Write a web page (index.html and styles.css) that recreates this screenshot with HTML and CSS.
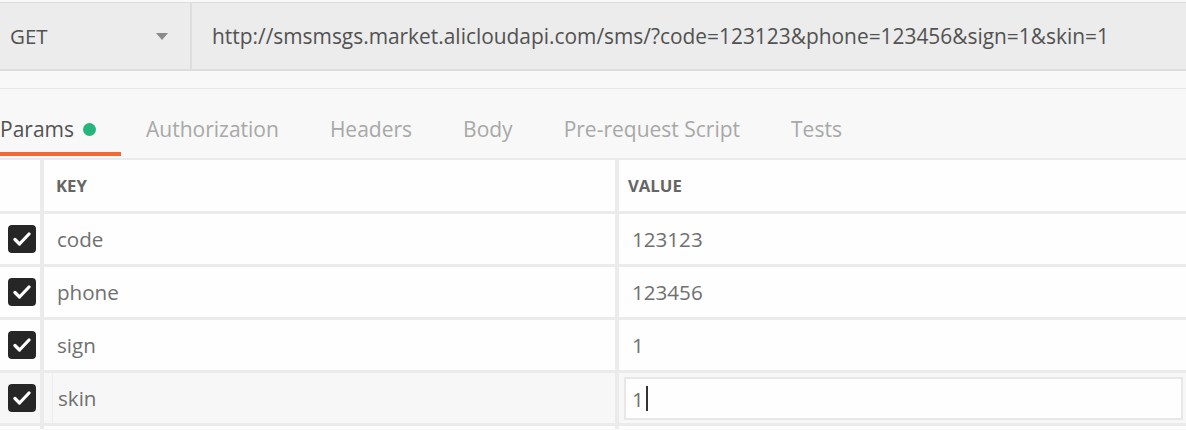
FILE: index.html
```html
<!DOCTYPE html>
<html lang="en">
<head>
<meta charset="utf-8">
<title>Request</title>
<link rel="stylesheet" href="styles.css">
</head>
<body>
<div class="request-bar">
  <div class="method">
    <span class="method-name">GET</span>
    <svg class="caret" width="12" height="7" viewBox="0 0 12 7"><path d="M0 0 H12 L6 7 Z" fill="#8a8a8a"/></svg>
  </div>
  <div class="url">http://smsmsgs.market.alicloudapi.com/sms/?code=123123&amp;phone=123456&amp;sign=1&amp;skin=1</div>
</div>
<div class="spacer"></div>
<nav class="tabs">
  <div class="tab active">Params <span class="dot"></span></div>
  <div class="tab">Authorization</div>
  <div class="tab">Headers</div>
  <div class="tab">Body</div>
  <div class="tab">Pre-request Script</div>
  <div class="tab">Tests</div>
</nav>
<div class="params">
  <div class="cell gutter"></div>
  <div class="cell head">KEY</div>
  <div class="cell head value-col">VALUE</div>

  <div class="cell gutter"><span class="check"><svg width="18" height="14" viewBox="0 0 18 14"><path d="M2 7.5 L6.5 12 L16 2" fill="none" stroke="#fff" stroke-width="3.2" stroke-linecap="round" stroke-linejoin="round"/></svg></span></div>
  <div class="cell">code</div>
  <div class="cell value-col">123123</div>

  <div class="cell gutter"><span class="check"><svg width="18" height="14" viewBox="0 0 18 14"><path d="M2 7.5 L6.5 12 L16 2" fill="none" stroke="#fff" stroke-width="3.2" stroke-linecap="round" stroke-linejoin="round"/></svg></span></div>
  <div class="cell">phone</div>
  <div class="cell value-col">123456</div>

  <div class="cell gutter"><span class="check"><svg width="18" height="14" viewBox="0 0 18 14"><path d="M2 7.5 L6.5 12 L16 2" fill="none" stroke="#fff" stroke-width="3.2" stroke-linecap="round" stroke-linejoin="round"/></svg></span></div>
  <div class="cell">sign</div>
  <div class="cell value-col">1</div>

  <div class="cell gutter hover"><span class="check"><svg width="18" height="14" viewBox="0 0 18 14"><path d="M2 7.5 L6.5 12 L16 2" fill="none" stroke="#fff" stroke-width="3.2" stroke-linecap="round" stroke-linejoin="round"/></svg></span></div>
  <div class="cell hover key-edit"><span class="key-box">skin</span></div>
  <div class="cell hover value-edit"><span class="input">1<span class="cursor"></span></span></div>

  <div class="cell gutter"></div>
  <div class="cell"></div>
  <div class="cell"></div>
</div>
</body>
</html>
```
FILE: styles.css
```css
* { box-sizing: border-box; }
html, body { margin: 0; padding: 0; }
body {
  background: #f7f8f7;
  font-family: "Open Sans", "DejaVu Sans", sans-serif;
  overflow: hidden;
  height: 430px;
}
.request-bar {
  margin-top: 2px;
  height: 69px;
  display: flex;
  background: #ebeceb;
  border-top: 1px solid #dcdddc;
  border-bottom: 2px solid #dcdddc;
}
.method {
  width: 192px;
  flex: none;
  display: flex;
  align-items: center;
  justify-content: space-between;
  padding: 0 22px 0 10px;
  border-right: 2px solid #dcdddc;
}
.method-name {
  font-size: 20.5px;
  color: #525252;
}
.caret { display: block; margin-top: 1px; }
.url {
  display: flex;
  align-items: center;
  padding-left: 20px;
  font-size: 20.9px;
  color: #525252;
  white-space: nowrap;
}
.spacer {
  height: 18px;
  border-bottom: 1px solid #e6e7e6;
}
.tabs {
  height: 71px;
  display: flex;
  margin-left: -25.5px;
  border-bottom: 2px solid #eaebea;
}
.tab {
  display: flex;
  align-items: center;
  padding: 11px 25.5px 0;
  font-size: 21px;
  color: #a8a8a8;
  position: relative;
  white-space: nowrap;
}
.tab.active { color: #525252; padding-right: 24.5px; }
.tab.active::after {
  content: "";
  position: absolute;
  left: 25.5px;
  right: 0;
  bottom: 2px;
  height: 4px;
  background: #f06a35;
}
.dot {
  display: inline-block;
  width: 13px;
  height: 13px;
  border-radius: 50%;
  background: #25b67d;
  margin-left: 9px;
}
.params {
  display: grid;
  grid-template-columns: 40px 571px 1fr;
  grid-template-rows: 51px repeat(4, 50px) 3px;
  column-gap: 4px;
  row-gap: 3px;
  background: #eaebea;
}
.cell {
  background: #fdfefd;
  display: flex;
  align-items: center;
  padding-left: 13px;
  font-size: 20.6px;
  color: #707070;
}
.cell.value-col { padding-left: 13px; }
.cell.head {
  font-size: 16.7px;
  font-weight: 700;
  color: #666;
  padding-left: 12px;
}
.cell.head.value-col { padding-left: 9px; }
.cell.gutter { padding-left: 8px; }
.check {
  width: 28px;
  height: 28px;
  border-radius: 4px;
  background: #262626;
  display: flex;
  align-items: center;
  justify-content: center;
}
.cell.hover { background: #f6f7f6; }
.cell.key-edit { padding-left: 8px; }
.key-box {
  display: flex;
  align-items: center;
  height: 100%;
  flex: 1;
  padding-left: 5px;
  border-left: 1px solid #ecedec;
}
.cell.value-edit { padding: 4px 3px 3px 5px; }
.input {
  flex: 1;
  height: 100%;
  display: flex;
  align-items: center;
  background: #fdfefd;
  border: 2px solid #e6e7e6;
  padding-left: 6px;
}
.cursor {
  display: inline-block;
  width: 2px;
  height: 25px;
  background: #333;
  margin-left: 2px;
}
```
